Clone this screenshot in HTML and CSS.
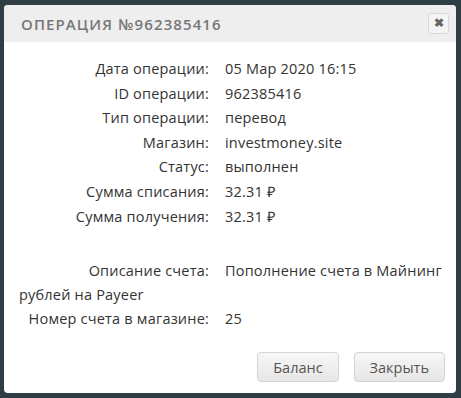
FILE: index.html
```html
<!DOCTYPE html>
<html>

<head lang="ru">
    <meta charset="utf-8" />
    <meta name="viewport" content="width=device-width, initial-scale=1" />
    <title>Операция</title>
    <link rel="stylesheet" href="styles.css">
</head>

<body>
    <div class="dialog">
        <div class="dialog-head">
            <h1>Операция №962385416</h1>
            <button class="close" title="Закрыть">&#10006;</button>
        </div>

        <div class="dialog-body">
            <div class="row"><span class="label">Дата операции:</span><span class="value">05 Мар 2020 16:15</span></div>
            <div class="row"><span class="label">ID операции:</span><span class="value">962385416</span></div>
            <div class="row"><span class="label">Тип операции:</span><span class="value">перевод</span></div>
            <div class="row"><span class="label">Магазин:</span><span class="value">investmoney.site</span></div>
            <div class="row"><span class="label">Статус:</span><span class="value">выполнен</span></div>
            <div class="row"><span class="label">Сумма списания:</span><span class="value">32.31 &#8381;</span></div>
            <div class="row"><span class="label">Сумма получения:</span><span class="value">32.31 &#8381;</span></div>

            <div class="row gap"><span class="label">Описание счета:</span><span class="value">Пополнение счета в Майнинг рублей на Payeer</span></div>
            <div class="row"><span class="label">Номер счета в магазине:</span><span class="value">25</span></div>
        </div>

        <div class="dialog-foot">
            <button class="btn">Баланс</button>
            <button class="btn">Закрыть</button>
        </div>
    </div>
</body>

</html>
```

FILE: styles.css
```css
body {
    margin: 0;
    background-color: #2f3d45;
    font-family: "Open Sans", "Liberation Sans", sans-serif;
}

.dialog {
    margin: 5px 5px 0 4px;
    height: 388px;
    background-color: #fff;
    border-radius: 4px;
    display: flex;
    flex-direction: column;
    overflow: hidden;
}

.dialog-head {
    height: 37px;
    background-color: #eeeeee;
    display: flex;
    align-items: center;
    justify-content: space-between;
    padding: 0 7px 0 17px;
}

.dialog-head h1 {
    margin: 0;
    font-size: 15px;
    font-weight: 600;
    text-transform: uppercase;
    letter-spacing: 1.1px;
    color: #777;
}

.close {
    width: 21px;
    height: 21px;
    padding: 0;
    font-size: 12px;
    font-weight: bold;
    line-height: 19px;
    color: #666;
    background-color: #f4f4f4;
    border: 1px solid #d8d8d8;
    border-radius: 3px;
}

.dialog-body {
    padding: 15px 4px 0 15px;
    font-size: 14.5px;
    letter-spacing: 0.2px;
    color: #333;
}

.row {
    line-height: 24.6px;
}

.gap {
    margin-top: 30px;
    line-height: 24px;
}

.label {
    display: inline-block;
    width: 190px;
    text-align: right;
    margin-right: 16px;
}

.dialog-foot {
    margin-top: auto;
    display: flex;
    justify-content: flex-end;
    gap: 15px;
    padding: 0 11px 11px 0;
}

.btn {
    height: 30px;
    padding: 0 15px;
    font-family: "Open Sans", "Liberation Sans", sans-serif;
    font-size: 14.5px;
    color: #555;
    background: linear-gradient(#f7f7f7, #e6e6e6);
    border: 1px solid #d4d4d4;
    border-radius: 4px;
}
```
